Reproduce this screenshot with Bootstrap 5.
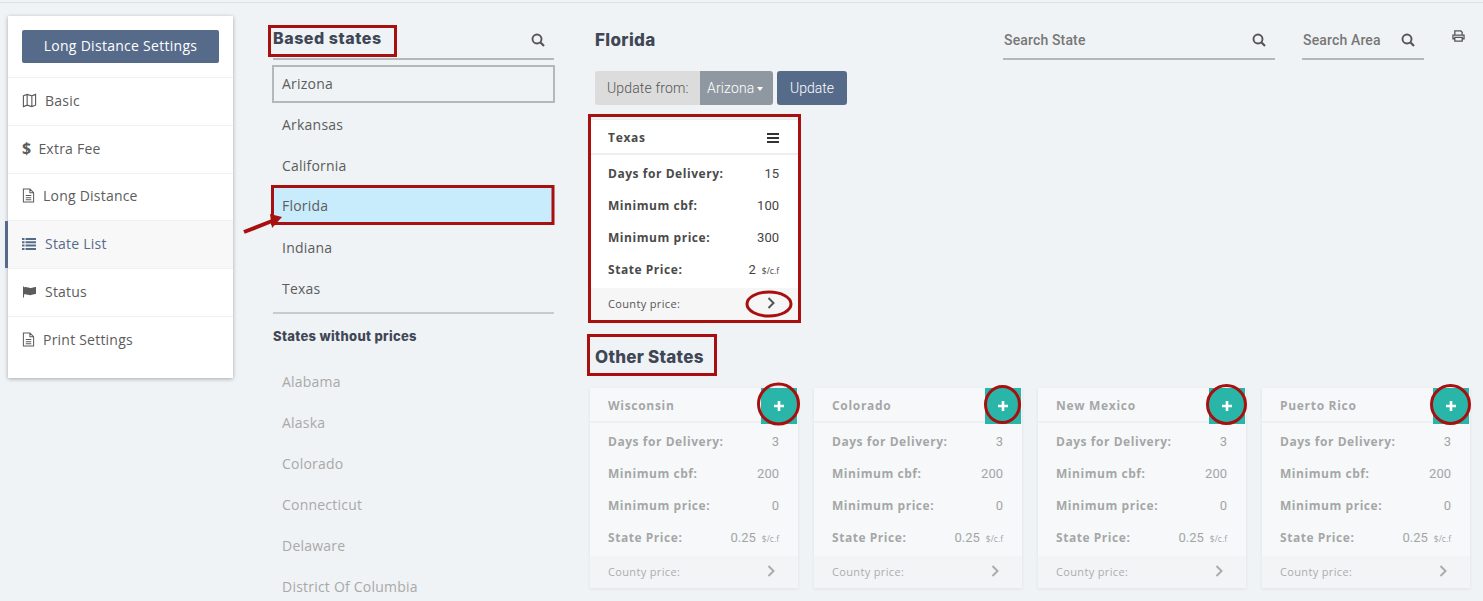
<!DOCTYPE html>
<html lang="en">
<head>
<meta charset="utf-8">
<title>Long Distance Settings</title>
<link href="https://cdn.jsdelivr.net/npm/bootstrap@5.3.0/dist/css/bootstrap.min.css" rel="stylesheet">
<style>
html,body{height:601px;overflow:hidden}
body{background:#eff3f5;font-family:"Open Sans","Liberation Sans",sans-serif;color:#555;font-size:14px;position:relative;padding-top:2px;letter-spacing:.22px}
.topline{height:1px;background:#dfe1e3}
.shell{padding:13px 18px 0 8px}
.side{width:225px;flex:none;background:#fff;box-shadow:0 1px 4px rgba(0,0,0,.3);height:362px;position:relative}
.side-top{padding:14px;border-bottom:1px solid #f0f1f2;height:62px}
.side-btn{background:#566b8a;color:#fff;width:197px;height:33px;font-size:14px;padding:0 0 2px;border:0;border-radius:2px;line-height:31px;letter-spacing:.28px}
.side-item{height:47.8px;border-bottom:1px solid #f0f1f2;padding-left:14px;padding-bottom:2px;color:#5c5c5c;font-size:14px;margin:0}
.side-item svg{flex:none}
.side-item.on{background:#f8f8f8;color:#566b8a;position:relative}
.side-item.on::before{content:"";position:absolute;left:-3px;top:0;bottom:0;width:3px;background:#566b8a}
.side-item:last-child{border-bottom:0}
.dollar{font-size:16px;line-height:1;margin-right:7px}
.gap-list{margin-right:9px}
.mid{width:281px;flex:none;margin-left:40px}
.h-based{font-family:Inter,"Liberation Sans",sans-serif;font-weight:800;font-size:16px;color:#3f4656;margin:0;letter-spacing:.55px}
.mid-head{height:44px;border-bottom:2px solid #b5b8ba;padding-top:13px;padding-right:9px}
.st{height:41px;line-height:41px;padding-left:9px;font-size:14px;color:#5c5c5c;margin:0}
.st.sel{border:2px solid #b5b8ba;height:38px;line-height:34px;margin:5px -1px 0;padding-left:8px}
.st.sel + .st{margin-top:1px}
.st.cur{background:#c9ecfd;height:36px;line-height:38px;margin:1px 0 4px}
.st.off{color:#a9a9a9}
.mid-sep{border-top:2px solid #c8cacc;margin:3px 0 0;opacity:1}
.h-none{font-family:Inter,"Liberation Sans",sans-serif;font-weight:800;font-size:13px;color:#3f4656;margin:15px 0 16px;letter-spacing:.33px}
.rgt{flex:1;margin-left:41px;min-width:0}
.rgt-head{height:44px}
.h-fl{font-family:Inter,"Liberation Sans",sans-serif;font-weight:800;font-size:17px;color:#3f4656;margin:14px 0 0;letter-spacing:.35px}
.srch{border-bottom:2px solid #b5b8ba;font-family:Roboto,sans-serif;font-weight:500;font-size:14px;color:#777;padding:0 9px 8px 1px;letter-spacing:.15px}
.srch svg{margin-top:-1px}
.srch-a{width:272px;margin-left:auto;margin-top:15px;height:29px}
.srch-b{width:122px;margin-left:27px;margin-top:15px;height:29px}
.prt{margin:14px 0 0 28px}
.upd{margin-top:11px;height:34px;font-family:Roboto,sans-serif;font-size:14px;font-weight:300;letter-spacing:.15px}
.upd-l{background:#dcdcdc;color:#555;width:105px;padding-left:12px;line-height:34px;border-radius:3px 0 0 3px}
.upd-s{background:#8f98a0;color:#fff;width:73px;padding-left:7px;line-height:34px;border-radius:0 3px 3px 0}
.upd-s::after{content:"";display:inline-block;border-top:4px solid #fff;border-left:3px solid transparent;border-right:3px solid transparent;margin-left:3px;vertical-align:2px}
.upd-b{background:#566b8a;color:#fff;width:70px;height:34px;border:0;padding:0;margin-left:4px;border-radius:3px;font:300 14px Roboto,sans-serif}
.tile{width:208px;height:200px;border:0;border-radius:0;background:#fff;box-shadow:0 1px 3px rgba(0,0,0,.15);flex:none}
.tiles{margin-left:-5px}
.one{margin:15px 0 0 -5px}
.tile-h{height:35px;border-bottom:2px solid #eeeeef;padding:2px 19px 0 18px;font-weight:700;font-size:12px;color:#4a4a4a;letter-spacing:.7px}
.tile-b{padding:3px 19px 0 18px;height:133px}
.kv{height:32px;font-size:12px;font-family:Roboto,sans-serif;color:#444;letter-spacing:0}
.kv b{font-family:"Open Sans",sans-serif;font-weight:700;color:#4a4a4a;letter-spacing:.55px}
.kv small{font-size:8.5px;margin-left:6px;font-family:"Open Sans",sans-serif}
.kv span{font-size:13px}
.tile-f{height:32px;background:#f6f6f6;padding:0 18px;font-size:11px;color:#555;letter-spacing:.35px}
.tile-f svg{margin:0 5px 3px 0}
.dim{opacity:.45}
.tile-w{position:relative;flex:none}
.plus{position:absolute;right:1px;top:0;width:36px;height:36px;background:#2ab5a9;border:0;padding:0}
.h-oth{font-family:Inter,"Liberation Sans",sans-serif;font-weight:800;font-size:17px;color:#3f4656;margin:27px 0 21px 0;line-height:20px;letter-spacing:.25px}
.mark-layer{position:absolute;left:0;top:0;pointer-events:none}
</style>
</head>
<body>
<svg width="0" height="0" class="d-block position-absolute">
<defs>
<symbol id="i-map" viewBox="0 0 16 16"><path d="M1.500 3 5.500 1.500 10.500 3 14.500 1.500V13l-4 1.500L5.500 13 1.500 14.500ZM5.500 1.500V13M10.500 3v11.500" fill="none" stroke="currentColor" stroke-width="1.200"/></symbol>
<symbol id="i-file" viewBox="0 0 14 16"><path d="M1.500 1h7l4 4v10h-11ZM8.500 1v4h4M4 8h6M4 10.300h6M4 12.600h6" fill="none" stroke="currentColor" stroke-width="1.100"/></symbol>
<symbol id="i-list" viewBox="0 0 14 12"><path d="M0 0h2.500v2H0ZM3.500 0H14v2H3.500ZM0 3.300h2.500v2H0ZM3.500 3.300H14v2H3.500ZM0 6.600h2.500v2H0ZM3.500 6.600H14v2H3.500ZM0 9.900h2.500v2H0ZM3.500 9.900H14v2H3.500Z" fill="currentColor"/></symbol>
<symbol id="i-flag" viewBox="0 0 15 13"><path d="M1 1.500h1v11H1Z M2 2.500C5 1 7 4 10 2.800c1.500-.5 3-.8 4-.8v7c-1 0-2.500.3-4 .8C7 11 5 8.500 2 9.500Z" fill="currentColor"/></symbol>
<symbol id="i-search" viewBox="0 0 14 14"><circle cx="6" cy="6" r="4.500" fill="none" stroke="currentColor" stroke-width="1.900"/><path d="m9.300 9.300 3.700 3.700" stroke="currentColor" stroke-width="2.200" fill="none"/></symbol>
<symbol id="i-print" viewBox="0 0 14 13"><path d="M3 5V1h6.500L11 2.500V5M3 9.500H1V5.500h12v4h-2M3 8h8v4H3Z" fill="none" stroke="currentColor" stroke-width="1.400"/></symbol>
<symbol id="i-bars" viewBox="0 0 12 10"><path d="M0 0h12v2H0ZM0 4h12v2H0ZM0 8h12v2H0Z" fill="currentColor"/></symbol>
<symbol id="i-chev" viewBox="0 0 8 12"><path d="m1.500 1 5 5-5 5" fill="none" stroke="currentColor" stroke-width="2"/></symbol>
<symbol id="i-plus" viewBox="0 0 12 12"><path d="M6 1v10M1 6h10" stroke="#fff" stroke-width="2.600" fill="none"/></symbol>
</defs>
</svg>

<div class="topline"></div>
<div class="d-flex shell">
  <nav class="side">
    <div class="side-top"><button class="btn side-btn" type="button">Long Distance Settings</button></div>
    <div class="d-flex align-items-center side-item"><svg width="15" height="15" class="me-2"><use href="#i-map"/></svg>Basic</div>
    <div class="d-flex align-items-center side-item"><b class="dollar">$</b>Extra Fee</div>
    <div class="d-flex align-items-center side-item"><svg width="13" height="15" class="me-2"><use href="#i-file"/></svg>Long Distance</div>
    <div class="d-flex align-items-center side-item on"><svg width="14" height="12" class="gap-list"><use href="#i-list"/></svg>State List</div>
    <div class="d-flex align-items-center side-item"><svg width="15" height="13" class="me-2"><use href="#i-flag"/></svg>Status</div>
    <div class="d-flex align-items-center side-item"><svg width="13" height="15" class="me-2"><use href="#i-file"/></svg>Print Settings</div>
  </nav>

  <section class="mid">
    <div class="d-flex justify-content-between align-items-start mid-head">
      <h5 class="h-based">Based states</h5>
      <svg width="14" height="14" class="mt-1" color="#555"><use href="#i-search"/></svg>
    </div>
    <div class="st sel">Arizona</div>
    <div class="st">Arkansas</div>
    <div class="st">California</div>
    <div class="st cur">Florida</div>
    <div class="st">Indiana</div>
    <div class="st">Texas</div>
    <hr class="mid-sep">
    <h6 class="h-none">States without prices</h6>
    <div class="st off">Alabama</div>
    <div class="st off">Alaska</div>
    <div class="st off">Colorado</div>
    <div class="st off">Connecticut</div>
    <div class="st off">Delaware</div>
    <div class="st off">District Of Columbia</div>
  </section>

  <main class="rgt">
    <div class="d-flex align-items-start rgt-head">
      <h5 class="h-fl">Florida</h5>
      <div class="d-flex justify-content-between align-items-center srch srch-a"><span>Search State</span><svg width="14" height="14" color="#555"><use href="#i-search"/></svg></div>
      <div class="d-flex justify-content-between align-items-center srch srch-b"><span>Search Area</span><svg width="14" height="14" color="#555"><use href="#i-search"/></svg></div>
      <svg width="13" height="12" class="prt" color="#555"><use href="#i-print"/></svg>
    </div>
    <div class="d-flex upd">
      <div class="upd-l">Update from:</div>
      <div class="upd-s">Arizona</div>
      <button class="upd-b" type="button">Update</button>
    </div>

    <div class="card tile one">
      <div class="d-flex justify-content-between align-items-center tile-h"><span>Texas</span><svg width="12" height="10" color="#333"><use href="#i-bars"/></svg></div>
      <div class="tile-b">
        <div class="d-flex justify-content-between align-items-center kv"><b>Days for Delivery:</b><span>15</span></div>
        <div class="d-flex justify-content-between align-items-center kv"><b>Minimum cbf:</b><span>100</span></div>
        <div class="d-flex justify-content-between align-items-center kv"><b>Minimum price:</b><span>300</span></div>
        <div class="d-flex justify-content-between align-items-center kv"><b>State Price:</b><span>2<small>$/c.f</small></span></div>
      </div>
      <div class="d-flex justify-content-between align-items-center tile-f"><span>County price:</span><svg width="8" height="12" color="#555"><use href="#i-chev"/></svg></div>
    </div>

    <h5 class="h-oth">Other States</h5>
    <div class="d-flex gap-3 tiles">
      <div class="tile-w">
        <div class="card tile dim">
          <div class="d-flex justify-content-between align-items-center tile-h"><span>Wisconsin</span></div>
          <div class="tile-b">
            <div class="d-flex justify-content-between align-items-center kv"><b>Days for Delivery:</b><span>3</span></div>
            <div class="d-flex justify-content-between align-items-center kv"><b>Minimum cbf:</b><span>200</span></div>
            <div class="d-flex justify-content-between align-items-center kv"><b>Minimum price:</b><span>0</span></div>
            <div class="d-flex justify-content-between align-items-center kv"><b>State Price:</b><span>0.25<small>$/c.f</small></span></div>
          </div>
          <div class="d-flex justify-content-between align-items-center tile-f"><span>County price:</span><svg width="8" height="12" color="#555"><use href="#i-chev"/></svg></div>
        </div>
        <button class="plus d-flex align-items-center justify-content-center" type="button" aria-label="Add"><svg width="12" height="12"><use href="#i-plus"/></svg></button>
      </div>
      <div class="tile-w">
        <div class="card tile dim">
          <div class="d-flex justify-content-between align-items-center tile-h"><span>Colorado</span></div>
          <div class="tile-b">
            <div class="d-flex justify-content-between align-items-center kv"><b>Days for Delivery:</b><span>3</span></div>
            <div class="d-flex justify-content-between align-items-center kv"><b>Minimum cbf:</b><span>200</span></div>
            <div class="d-flex justify-content-between align-items-center kv"><b>Minimum price:</b><span>0</span></div>
            <div class="d-flex justify-content-between align-items-center kv"><b>State Price:</b><span>0.25<small>$/c.f</small></span></div>
          </div>
          <div class="d-flex justify-content-between align-items-center tile-f"><span>County price:</span><svg width="8" height="12" color="#555"><use href="#i-chev"/></svg></div>
        </div>
        <button class="plus d-flex align-items-center justify-content-center" type="button" aria-label="Add"><svg width="12" height="12"><use href="#i-plus"/></svg></button>
      </div>
      <div class="tile-w">
        <div class="card tile dim">
          <div class="d-flex justify-content-between align-items-center tile-h"><span>New Mexico</span></div>
          <div class="tile-b">
            <div class="d-flex justify-content-between align-items-center kv"><b>Days for Delivery:</b><span>3</span></div>
            <div class="d-flex justify-content-between align-items-center kv"><b>Minimum cbf:</b><span>200</span></div>
            <div class="d-flex justify-content-between align-items-center kv"><b>Minimum price:</b><span>0</span></div>
            <div class="d-flex justify-content-between align-items-center kv"><b>State Price:</b><span>0.25<small>$/c.f</small></span></div>
          </div>
          <div class="d-flex justify-content-between align-items-center tile-f"><span>County price:</span><svg width="8" height="12" color="#555"><use href="#i-chev"/></svg></div>
        </div>
        <button class="plus d-flex align-items-center justify-content-center" type="button" aria-label="Add"><svg width="12" height="12"><use href="#i-plus"/></svg></button>
      </div>
      <div class="tile-w">
        <div class="card tile dim">
          <div class="d-flex justify-content-between align-items-center tile-h"><span>Puerto Rico</span></div>
          <div class="tile-b">
            <div class="d-flex justify-content-between align-items-center kv"><b>Days for Delivery:</b><span>3</span></div>
            <div class="d-flex justify-content-between align-items-center kv"><b>Minimum cbf:</b><span>200</span></div>
            <div class="d-flex justify-content-between align-items-center kv"><b>Minimum price:</b><span>0</span></div>
            <div class="d-flex justify-content-between align-items-center kv"><b>State Price:</b><span>0.25<small>$/c.f</small></span></div>
          </div>
          <div class="d-flex justify-content-between align-items-center tile-f"><span>County price:</span><svg width="8" height="12" color="#555"><use href="#i-chev"/></svg></div>
        </div>
        <button class="plus d-flex align-items-center justify-content-center" type="button" aria-label="Add"><svg width="12" height="12"><use href="#i-plus"/></svg></button>
      </div>
    </div>
  </main>
</div>

<svg class="mark-layer" width="1483" height="601" fill="none" stroke="#a80f0f" stroke-width="3">
  <rect x="269.500" y="26.500" width="126" height="29"/>
  <rect x="272.500" y="186.500" width="280.500" height="37"/>
  <path d="M244 232 272 221" stroke-width="4"/>
  <path d="M282 217 270 214 272 228Z" fill="#a80f0f" stroke="none"/>
  <rect x="589.500" y="115.500" width="210" height="206"/>
  <ellipse cx="769" cy="304" rx="22" ry="12"/>
  <rect x="588.500" y="335.500" width="127" height="39"/>
  <ellipse cx="778.500" cy="404" rx="20" ry="20"/>
  <ellipse cx="1002.500" cy="404.500" rx="17" ry="18"/>
  <ellipse cx="1226.500" cy="404.500" rx="19" ry="19"/>
  <ellipse cx="1450.500" cy="404.500" rx="19" ry="19"/>
</svg>
</body>
</html>
